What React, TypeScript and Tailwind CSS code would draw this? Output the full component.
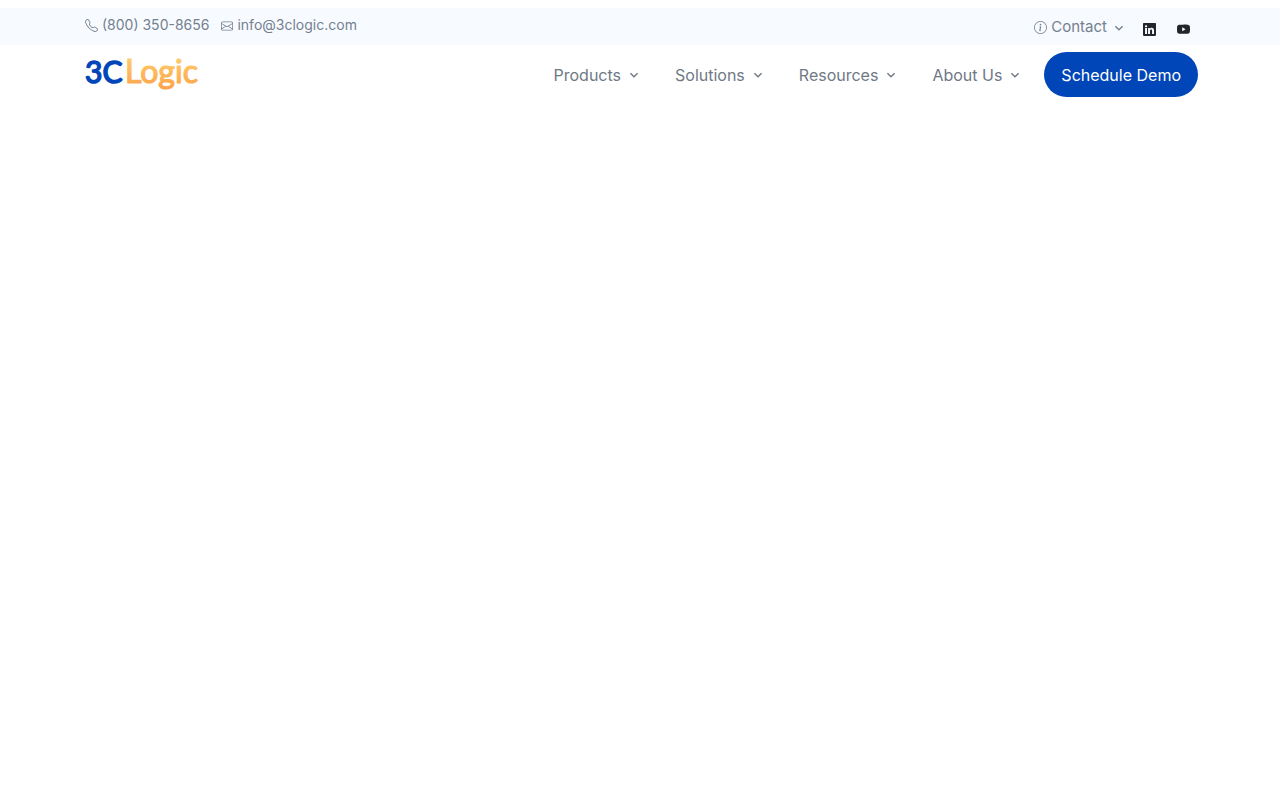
import { BsEnvelope, BsInfoCircle, BsLinkedin, BsTelephone, BsYoutube } from 'react-icons/bs';

const menus = ['Products', 'Solutions', 'Resources', 'About Us'];

function Caret() {
  return (
    <svg className="h-2 w-2.5 shrink-0" viewBox="0 0 10 8" fill="none" stroke="currentColor" strokeWidth="1.4" aria-hidden="true">
      <path d="M1.4 2.2 5 5.7 8.6 2.2" />
    </svg>
  );
}

function Logo() {
  return (
    <svg className="h-12 w-31" viewBox="0 0 124 48" role="img" aria-label="3CLogic">
      <defs>
        <linearGradient id="logo-gold" x1="0" y1="0" x2="0" y2="1">
          <stop offset="0.2" stopColor="#ffca68" />
          <stop offset="1" stopColor="#fba24b" />
        </linearGradient>
      </defs>
      <g fontFamily="Lato, sans-serif" fontWeight="400" strokeLinejoin="round">
        <text x="0" y="32" fontSize="30" fill="#0046b8" stroke="#0046b8" strokeWidth="1.5">3C</text>
        <text x="40" y="32" fontSize="32" fill="url(#logo-gold)" stroke="url(#logo-gold)" strokeWidth="1.2">Logic</text>
      </g>
    </svg>
  );
}

export default function App() {
  return (
    <div className="min-h-screen bg-white pt-2 font-[Inter,sans-serif] text-[#6f7985]">
      <div className="bg-[#f7fbff] text-[#75808f]">
        <div className="mx-auto flex h-[37px] max-w-[1140px] items-center justify-between px-[15px]">
          <div className="flex items-center gap-3 pb-1 text-sm">
            <a href="tel:8003508656" className="flex items-center gap-1">
              <BsTelephone className="mt-0.5 size-[13px]" /> (800) 350-8656
            </a>
            <a href="mailto:info@3clogic.com" className="flex items-center gap-1">
              <BsEnvelope className="mt-0.5 size-3" /> info@3clogic.com
            </a>
          </div>
          <div className="flex items-center pt-1 pr-[5px]">
            <button type="button" className="-mt-1 flex items-center gap-1 pt-0.5 text-[15px]">
              <BsInfoCircle className="size-[13px]" /> Contact
              <span className="ml-[3px]"><Caret /></span>
            </button>
            <a href="#linkedin" aria-label="LinkedIn" className="mt-0.5 ml-[19px] text-[#242528]">
              <BsLinkedin className="size-[13px]" />
            </a>
            <a href="#youtube" aria-label="YouTube" className="mt-0.5 ml-[21px] text-[#242528]">
              <BsYoutube className="size-[13px]" />
            </a>
          </div>
        </div>
      </div>

      <header className="mx-auto flex h-[59px] max-w-[1140px] items-center justify-between pr-[12px] pl-[15px]">
        <a href="#home"><Logo /></a>
        <nav className="flex items-center">
          {menus.map((name) => (
            <button key={name} type="button" className="mr-9 flex items-center gap-2 text-base last-of-type:mr-6">
              {name} <Caret />
            </button>
          ))}
          <a href="#demo" className="flex h-[45px] items-center rounded-full bg-[#0046b8] px-[17px] text-white">
            Schedule Demo
          </a>
        </nav>
      </header>
    </div>
  );
}
